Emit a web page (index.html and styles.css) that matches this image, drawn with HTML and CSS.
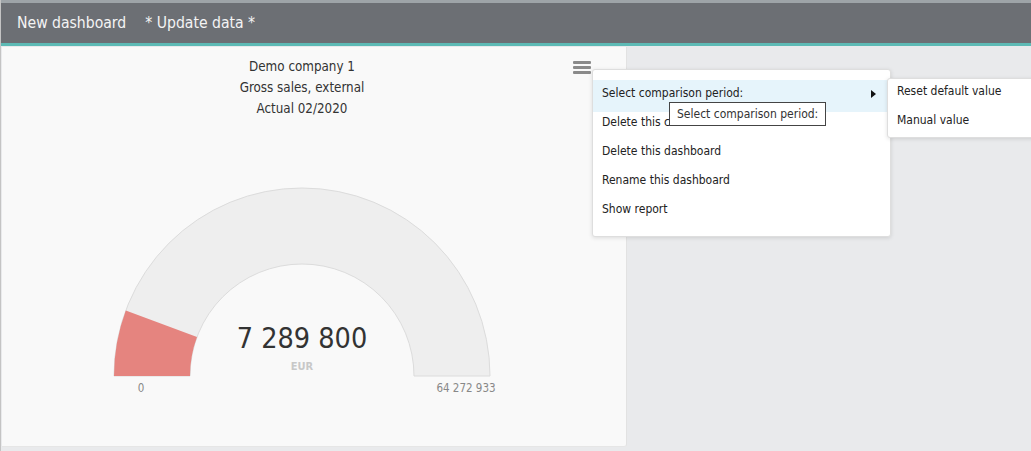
FILE: index.html
```html
<!DOCTYPE html>
<html lang="en">
<head>
  <meta charset="UTF-8" />
  <meta name="viewport" content="width=device-width, initial-scale=1.0" />
  <title>New dashboard</title>
  <link rel="stylesheet" href="styles.css">
</head>
<body>
  <header class="topbar">
    <span class="tab">New dashboard</span>
    <span class="tab">* Update data *</span>
  </header>

  <main class="board">
    <section class="card">
      <div class="card-title">
        <div>Demo company 1</div>
        <div>Gross sales, external</div>
        <div>Actual 02/2020</div>
      </div>

      <svg class="gauge" width="420" height="220" viewBox="0 0 420 220">
        <path d="M 22 196 A 188 188 0 0 1 398 196 L 322 196 A 112 112 0 0 0 98 196 Z" fill="#eeeeee" stroke="#dcdcdc" stroke-width="1"/>
        <path d="M 22 196 A 188 188 0 0 1 33.8 130.5 L 105 157 A 112 112 0 0 0 98 196 Z" fill="#e5847f"/>
        <text class="gauge-value" x="210" y="168" text-anchor="middle">7 289 800</text>
        <text class="gauge-unit" x="210" y="190" text-anchor="middle">EUR</text>
        <text class="gauge-label" x="49" y="212" text-anchor="middle">0</text>
        <text class="gauge-label" x="374" y="212" text-anchor="middle">64 272 933</text>
      </svg>

      <button class="menu-btn" aria-label="Menu">
        <svg width="18" height="13" viewBox="0 0 18 13">
          <rect x="0" y="0" width="18" height="3" rx="1" fill="#8a8a8a"/>
          <rect x="0" y="5" width="18" height="3" rx="1" fill="#8a8a8a"/>
          <rect x="0" y="10" width="18" height="3" rx="1" fill="#8a8a8a"/>
        </svg>
      </button>
    </section>
  </main>

  <ul class="menu">
    <li class="menu-item active">Select comparison period:<span class="arrow"></span></li>
    <li class="menu-item">Delete this chart</li>
    <li class="menu-item">Delete this dashboard</li>
    <li class="menu-item">Rename this dashboard</li>
    <li class="menu-item">Show report</li>
  </ul>

  <ul class="submenu">
    <li class="submenu-item">Reset default value</li>
    <li class="submenu-item">Manual value</li>
  </ul>

  <div class="tooltip">Select comparison period:</div>
</body>
</html>
```

FILE: styles.css
```css
body {
  font-family: "DejaVu Sans Condensed", "DejaVu Sans", sans-serif;
  background: #e9eaec;
  margin: 0;
  height: 451px;
  overflow: hidden;
  border-left: 1px solid #c4c4c4;
  position: relative;
}
.topbar {
  height: 40px;
  background: #6c6f74;
  border-top: 3px solid #9ea4a8;
  border-bottom: 3px solid #5dbab5;
  display: flex;
  align-items: center;
  gap: 19px;
  padding-left: 16px;
  color: #f4f4f4;
  font-size: 15.6px;
}
.board {
  padding: 1px 0 0 1px;
}
.card {
  position: relative;
  width: 625px;
  height: 400px;
  box-sizing: border-box;
  padding: 9px 24px 0 0;
  background: #f9f9f9;
  border-right: 1px solid #e2e2e2;
  border-bottom: 1px solid #e6e6e6;
  border-radius: 0 0 3px 0;
  display: flex;
  flex-direction: column;
  align-items: center;
}
.card-title {
  text-align: center;
  font-size: 13.3px;
  line-height: 21px;
  color: #333;
}
.gauge {
  margin-top: 61px;
  display: block;
}
.gauge-value {
  font-size: 28.5px;
  fill: #333;
}
.gauge-unit {
  font-size: 11px;
  font-weight: bold;
  fill: #c8c8c8;
}
.gauge-label {
  font-size: 11.5px;
  fill: #888;
}
.menu-btn {
  position: absolute;
  left: 571px;
  top: 14px;
  padding: 0;
  border: none;
  background: none;
  line-height: 0;
}
.menu {
  position: absolute;
  left: 591px;
  top: 69px;
  width: 299px;
  height: 168px;
  box-sizing: border-box;
  margin: 0;
  padding: 9px 0 0;
  list-style: none;
  background: #fff;
  border: 1px solid #dedede;
  border-radius: 3px;
  box-shadow: 0 1px 4px rgba(0, 0, 0, 0.12);
  font-size: 12px;
  color: #222;
}
.menu-item {
  position: relative;
  line-height: 29px;
  padding: 0 9px;
}
.menu-item.active {
  padding-bottom: 4px;
  margin-bottom: -4px;
  background: linear-gradient(to bottom, transparent 1px, #e6f4fb 1px);
}
.arrow {
  position: absolute;
  right: 14px;
  top: 11px;
  border-left: 5px solid #111;
  border-top: 4px solid transparent;
  border-bottom: 4px solid transparent;
}
.submenu {
  position: absolute;
  left: 886px;
  top: 78px;
  width: 170px;
  margin: 0;
  padding: 2px 0 0;
  list-style: none;
  background: #fff;
  border: 1px solid #dedede;
  border-radius: 3px;
  box-shadow: 0 1px 4px rgba(0, 0, 0, 0.12);
  font-size: 12px;
  color: #222;
}
.submenu-item {
  line-height: 21px;
  padding: 0 9px 8px;
}
.submenu-item:last-child {
  padding-bottom: 6px;
}
.tooltip {
  position: absolute;
  left: 668px;
  top: 102px;
  height: 24px;
  box-sizing: border-box;
  padding: 0 7px;
  line-height: 22px;
  background: #fff;
  border: 1px solid #444;
  font-size: 12px;
  color: #333;
}
```
